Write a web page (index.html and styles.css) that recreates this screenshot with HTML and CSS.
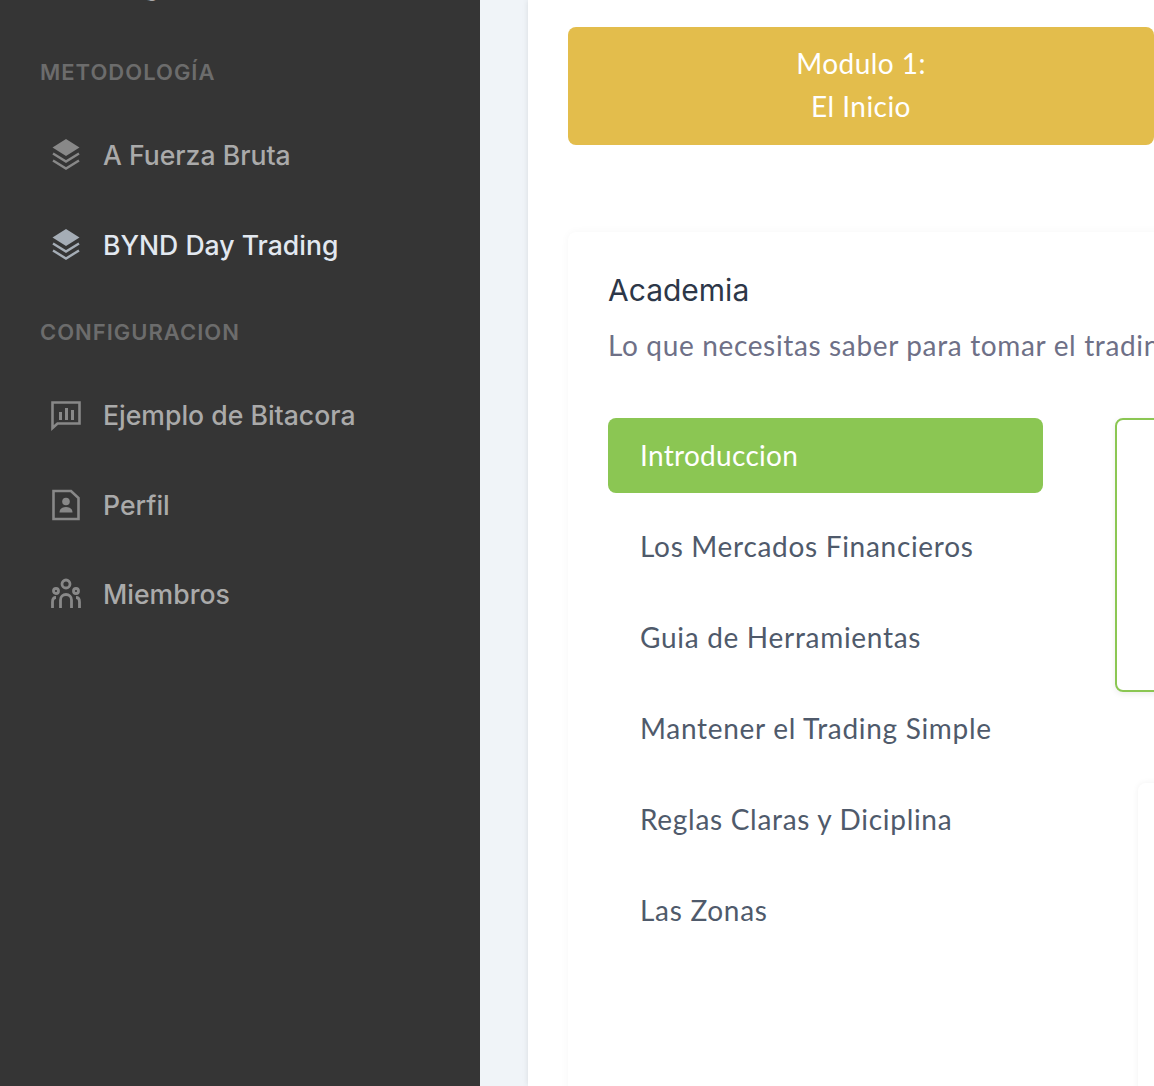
FILE: index.html

```html
<!DOCTYPE html>
<html lang="es">
<head>
    <meta charset="UTF-8">
    <meta name="viewport" content="width=device-width, initial-scale=1.0">
    <title>Academia</title>
    <link rel="stylesheet" href="styles.css">
</head>
<body>
    <div class="app">
        <!-- Sidebar -->
        <aside class="sidebar">
            <a class="nav-link nav-link-cut"><span class="nav-icon"></span>Blog</a>

            <div class="nav-title">METODOLOGÍA</div>
            <a class="nav-link">
                <svg class="nav-icon" viewBox="0 0 30 32"><use href="#icon-layers"/></svg>
                A Fuerza Bruta
            </a>
            <a class="nav-link active">
                <svg class="nav-icon" viewBox="0 0 30 32"><use href="#icon-layers"/></svg>
                BYND Day Trading
            </a>

            <div class="nav-title nav-title-second">CONFIGURACION</div>
            <a class="nav-link">
                <svg class="nav-icon" viewBox="0 0 30 32">
                    <path d="M1.5 3.5H28.5V24.5H6.5L1.5 29Z" fill="none" stroke="currentColor" stroke-width="2.6"/>
                    <path d="M8 13h3v8H8zM14 9h3v12h-3zM20 11h3v10h-3z" fill="currentColor"/>
                </svg>
                Ejemplo de Bitacora
            </a>
            <a class="nav-link">
                <svg class="nav-icon" viewBox="0 0 30 32">
                    <path d="M2.5 2H20L27.5 9V30H2.5Z" fill="none" stroke="currentColor" stroke-width="2.6"/>
                    <circle cx="15" cy="12.5" r="3.8" fill="currentColor"/>
                    <path d="M8.500 23.500c0-4 3-5.500 6.500-5.500s6.500 1.500 6.500 5.500Z" fill="currentColor"/>
                </svg>
                Perfil
            </a>
            <a class="nav-link">
                <svg class="nav-icon" viewBox="0 0 30 32">
                    <g fill="none" stroke="currentColor" stroke-width="2.800">
                        <circle cx="15" cy="6" r="4"/>
                        <circle cx="5" cy="13" r="2.500"/>
                        <circle cx="25" cy="13" r="2.500"/>
                        <path d="M9.500 30V22a5.500 5.500 0 0 1 11 0V30"/>
                        <path d="M1.500 30V24c0-3 1.500-4.500 3.500-4.500"/>
                        <path d="M28.500 30V24c0-3-1.500-4.500-3.500-4.500"/>
                    </g>
                </svg>
                Miembros
            </a>
        </aside>

        <main class="main">
            <div class="panel">
                <div class="module-banner">Modulo 1:<br>El Inicio</div>

                <section class="card">
                    <h2 class="card-title">Academia</h2>
                    <p class="card-subtitle">Lo que necesitas saber para tomar el trading en serio</p>

                    <div class="lessons">
                        <ul class="lesson-list">
                            <li class="lesson active">Introduccion</li>
                            <li class="lesson">Los Mercados Financieros</li>
                            <li class="lesson">Guia de Herramientas</li>
                            <li class="lesson">Mantener el Trading Simple</li>
                            <li class="lesson">Reglas Claras y Diciplina</li>
                            <li class="lesson">Las Zonas</li>
                        </ul>
                        <div class="lesson-content">
                            <div class="video-box"></div>
                            <div class="notes-card"></div>
                        </div>
                    </div>
                </section>
            </div>
        </main>
    </div>

    <svg class="icon-defs" width="0" height="0">
        <symbol id="icon-layers" viewBox="0 0 30 32">
            <path d="M15 0L28.500 8.500L15 17L1.500 8.500Z" fill="currentColor"/>
            <path d="M2 14.500L15 22.500L28 14.500M2 21.500L15 29.500L28 21.500" fill="none" stroke="currentColor" stroke-width="2.400"/>
        </symbol>
    </svg>
</body>
</html>
```

FILE: styles.css

```css
* {
    box-sizing: border-box;
}
html, body {
    margin: 0;
    height: 100%;
    overflow: hidden;
}
body {
    font-family: "Lato", "Open Sans", sans-serif;
    background-color: #f0f4f8;
}
.app {
    display: flex;
    height: 1086px;
    overflow: hidden;
}
.icon-defs {
    position: absolute;
}

/* Sidebar */
.sidebar {
    flex: 0 0 480px;
    height: 100%;
    overflow: hidden;
    padding-left: 40px;
    background-color: #353535;
    font-family: "Inter", sans-serif;
}
.nav-title {
    height: 32px;
    line-height: 32px;
    margin: 26px 0 22.6px;
    font-size: 22px;
    font-weight: 600;
    letter-spacing: 1px;
    color: #6c6c6c;
}
.nav-title-second {
    margin: 26.4px 0 22px;
}
.nav-link {
    display: flex;
    align-items: center;
    gap: 22.5px;
    height: 89.6px;
    padding-left: 10.5px;
    font-size: 26.6px;
    font-weight: 500;
    color: #aaaaaa;
}
.nav-link-cut {
    margin-top: -59.6px;
}
.nav-link.active {
    color: #e2e8f0;
}
.nav-icon {
    flex: 0 0 30px;
    width: 30px;
    height: 32px;
    color: #888888;
}
.nav-link.active .nav-icon {
    color: #a5adb6;
}

/* Main */
.main {
    flex: 1;
    min-width: 0;
    padding-left: 48px;
}
.panel {
    height: 100%;
    padding: 27px 0 0 40px;
    overflow: hidden;
    background-color: #fff;
    box-shadow: 0 0 6px rgba(0, 0, 0, 0.1);
}
.module-banner {
    height: 118px;
    padding: 15px 0;
    border-radius: 8px;
    background-color: #e3bd4c;
    color: #fff;
    font-size: 28px;
    letter-spacing: 0.45px;
    line-height: 43px;
    text-align: center;
}
.card {
    width: 900px;
    height: 900px;
    margin-top: 87px;
    padding: 40px;
    border-radius: 8px;
    background-color: #fff;
    box-shadow: 0 0 8px rgba(0, 0, 0, 0.04);
}
.card-title {
    margin: 0;
    font-family: "Inter", sans-serif;
    font-size: 30px;
    font-weight: 400;
    line-height: 36px;
    color: #2d3748;
}
.card-subtitle {
    margin: 19px 0 0;
    font-size: 28px;
    letter-spacing: 0.65px;
    line-height: 36px;
    white-space: nowrap;
    color: #6e7087;
}

/* Lessons */
.lessons {
    display: flex;
    gap: 72px;
    margin-top: 55px;
}
.lesson-list {
    flex: 0 0 435px;
    display: flex;
    flex-direction: column;
    gap: 16px;
    margin: 0;
    padding: 0;
    list-style: none;
}
.lesson {
    height: 75px;
    padding-left: 32px;
    border-radius: 8px;
    font-size: 28px;
    letter-spacing: 0.7px;
    line-height: 74px;
    color: #4f5a6b;
}
.lesson.active {
    background-color: #8bc653;
    color: #fff;
    letter-spacing: 0.3px;
}
.lesson-content {
    flex: 1;
}
.video-box {
    height: 274px;
    border: 2px solid #8bc653;
    border-radius: 8px;
    box-shadow: 0 2px 6px rgba(0, 0, 0, 0.08);
}
.notes-card {
    height: 400px;
    margin: 91px 0 0 23px;
    border-radius: 8px;
    background-color: #fff;
    box-shadow: 0 0 6px rgba(0, 0, 0, 0.06);
}
```
